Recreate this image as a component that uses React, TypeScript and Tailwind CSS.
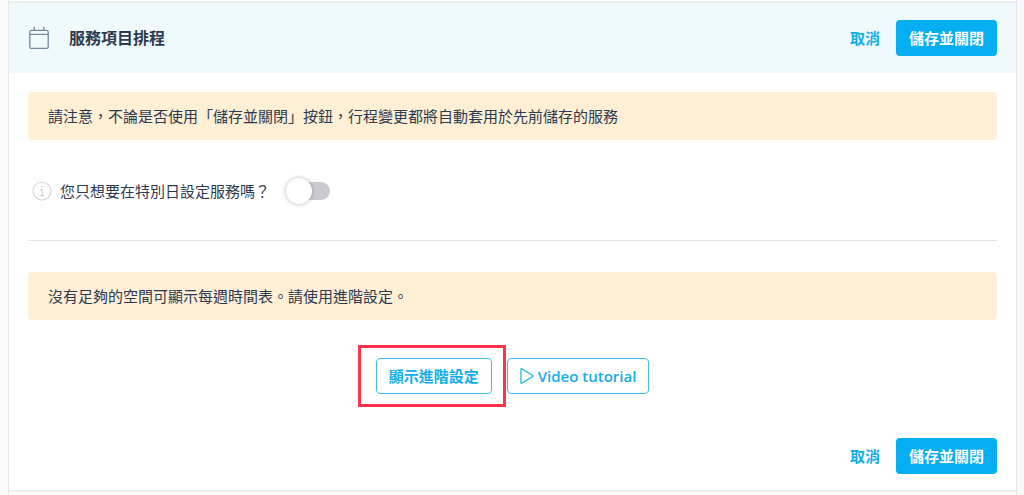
import { useState, type ReactNode } from "react";

function CalendarIcon() {
  return (
    <svg
      className="h-6 w-5 shrink-0"
      viewBox="0 0 20 24"
      fill="none"
      stroke="#7486a0"
      strokeWidth="1.3"
      strokeLinecap="round"
      aria-hidden
    >
      <rect x="0.8" y="4.4" width="18.4" height="18" rx="1.5" />
      <path d="M0.8 8.4H19.2M5.2 1.4V4.4M14.8 1.4V4.4" />
    </svg>
  );
}

function InfoIcon() {
  return (
    <svg className="h-5 w-5 shrink-0" viewBox="0 0 20 20" fill="none" stroke="#d3d6d9" aria-hidden>
      <circle cx="10" cy="10" r="9" strokeWidth="1.2" />
      <circle cx="9.8" cy="5.8" r="1" fill="#d3d6d9" stroke="none" />
      <path d="M8 8.7H10.2V14.5M7.6 14.6H12.4" strokeWidth="1.2" />
    </svg>
  );
}

function PlayIcon() {
  return (
    <svg
      className="h-4 w-3.5 shrink-0"
      viewBox="0 0 14 16"
      fill="none"
      stroke="currentColor"
      strokeWidth="1.1"
      strokeLinejoin="round"
      aria-hidden
    >
      <path d="M0.9 1.2V14.8Q0.9 15.6 1.6 15.2L12.9 8.5Q13.5 8 12.9 7.5L1.6 0.8Q0.9 0.4 0.9 1.2Z" />
    </svg>
  );
}

function Notice({ children }: { children: ReactNode }) {
  return (
    <p className="rounded bg-[#ffefd5] px-5 py-3 text-[15px] leading-6 text-[#2c3a50]">
      {children}
    </p>
  );
}

function FormActions() {
  return (
    <div className="flex items-center gap-4 text-[15px] font-bold">
      <button type="button" className="h-9 text-[#12ade9]">
        取消
      </button>
      <button type="button" className="h-9 rounded bg-[#05aef0] px-[13px] text-white">
        儲存並關閉
      </button>
    </div>
  );
}

function OutlineButton({ children }: { children: ReactNode }) {
  return (
    <button
      type="button"
      className="flex h-9 items-center gap-1 rounded border border-[#3bbcf0] bg-white px-3 text-[15px] font-semibold text-[#12ade9]"
    >
      {children}
    </button>
  );
}

export default function App() {
  const [specialDaysOnly, setSpecialDaysOnly] = useState(false);

  return (
    <div className="min-h-screen bg-[#fafafa] pr-[7px] pl-2 font-['Open_Sans','Noto_Sans_CJK_TC',sans-serif]">
      <div className="min-h-screen border-x border-[#e6e6e6] bg-white pt-px">
        <section className="border-y-2 border-[#eeeeee]">
          <header className="flex items-center justify-between bg-[#f0fafd] py-[17px] pr-[19px] pl-5">
            <div className="flex items-center gap-5">
              <CalendarIcon />
              <h2 className="text-base font-bold text-[#2c3a50]">服務項目排程</h2>
            </div>
            <FormActions />
          </header>

          <div className="px-[19px] pt-[19px] pb-4">
            <Notice>請注意，不論是否使用「儲存並關閉」按鈕，行程變更都將自動套用於先前儲存的服務</Notice>

            <label className="flex h-[101px] items-center gap-2 border-b border-[#e4e4e4] px-1 pt-0.5 text-[15px] text-[#2c3a50]">
              <InfoIcon />
              您只想要在特別日設定服務嗎？
              <span className="relative ml-2 flex h-7 w-11 shrink-0 items-center justify-end">
                <input
                  type="checkbox"
                  role="switch"
                  checked={specialDaysOnly}
                  onChange={(e) => setSpecialDaysOnly(e.target.checked)}
                  className="peer h-[18px] w-9 cursor-pointer appearance-none rounded-full bg-[#c9c9d1] checked:bg-[#8fdaf8]"
                />
                <span className="pointer-events-none absolute top-px left-0 h-[26px] w-[26px] rounded-full bg-white shadow-[0_0_4px_rgba(0,0,0,0.3)] transition peer-checked:translate-x-5" />
              </span>
            </label>

            <div className="mt-[31px]">
              <Notice>沒有足夠的空間可顯示每週時間表。請使用進階設定。</Notice>
            </div>

            <div className="mt-[38px] flex justify-center gap-[15px]">
              <div className="relative">
                <OutlineButton>顯示進階設定</OutlineButton>
                <span className="pointer-events-none absolute -inset-y-[13px] -right-3.5 -left-[18px] border-3 border-[#fb3449]" />
              </div>
              <OutlineButton>
                <PlayIcon />
                Video tutorial
              </OutlineButton>
            </div>

            <footer className="mt-11 flex justify-end">
              <FormActions />
            </footer>
          </div>
        </section>
      </div>
    </div>
  );
}
